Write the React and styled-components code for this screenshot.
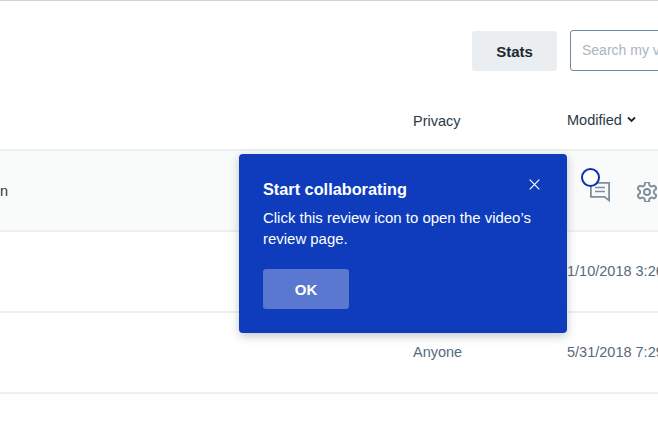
import React from 'react';
import styled, { createGlobalStyle } from 'styled-components';

const Global = createGlobalStyle`
  html, body { margin: 0; padding: 0; background: #fff; overflow: hidden; }
  body { font-family: "Liberation Sans", Arial, sans-serif; -webkit-font-smoothing: antialiased; }
`;

const Page = styled.div`
  position: relative;
  width: 658px;
  height: 426px;
  overflow: hidden;
  border-top: 1px solid #c9d4dc;
  box-sizing: border-box;
`;

const Toolbar = styled.div`
  display: flex;
  align-items: flex-start;
  gap: 13px;
  height: 41px;
  padding: 29px 0 0 472px;
`;

const StatsButton = styled.button`
  flex: none;
  width: 85px;
  height: 40px;
  margin-top: 1px;
  border: 0;
  border-radius: 3px;
  background: #ebeef0;
  color: #1c2833;
  font: bold 15px "Liberation Sans", Arial, sans-serif;
  padding: 0;
`;

const Search = styled.div`
  flex: none;
  box-sizing: border-box;
  width: 240px;
  height: 41px;
  border: 1px solid #71899b;
  border-radius: 3px;
  padding: 0 11px 1px;
  display: flex;
  align-items: center;
  color: #a9b6c1;
  font-size: 14px;
  white-space: nowrap;
`;

const columns = `
  display: grid;
  grid-template-columns: 413px 154px 1fr;
  align-items: center;
`;

const Header = styled.div`
  ${columns}
  box-sizing: border-box;
  height: 78px;
  padding-top: 20px;
  color: #2b3a47;
  font-size: 14.5px;
`;

const HeadCell = styled.div`
  grid-column: ${p => p.$col};
  display: flex;
  align-items: center;
  gap: 5px;
  margin-top: ${p => (p.$up ? -1 : 1)}px;
`;

const Row = styled.div`
  ${columns}
  box-sizing: border-box;
  height: 81px;
  border-top: 2px solid #edf0f1;
  background: ${p => (p.$active ? '#f9fafa' : '#fff')};
  font-size: 14.5px;
  color: #566a7b;
  white-space: nowrap;
`;

const LastRule = styled.div`
  height: 2px;
  background: #edf0f1;
`;

const NameCell = styled.div`
  grid-column: 1;
  color: #2b3a47;
`;

const PrivacyCell = styled.div`
  grid-column: 2;
  margin-top: -1px;
`;

const DateCell = styled.div`
  grid-column: 3;
  margin-top: -2px;
`;

const ActionCell = styled.div`
  grid-column: 3;
  display: flex;
  align-items: center;
  gap: 27px;
  padding: 2px 0 0 23px;
  color: #7b8f9f;
`;

const Popover = styled.div`
  position: absolute;
  left: 239px;
  top: 153px;
  box-sizing: border-box;
  width: 328px;
  height: 179px;
  padding: 24px 24px 0;
  border-radius: 4px;
  background: #0e3cbc;
  box-shadow: 0 3px 10px rgba(40, 55, 70, 0.28);
  color: #fff;
`;

const Title = styled.div`
  font-size: 16.3px;
  font-weight: bold;
  line-height: 22px;
`;

const Body = styled.p`
  margin: 7px 0 0;
  font-size: 14.95px;
  line-height: 21px;
`;

const OkButton = styled.button`
  display: block;
  width: 86px;
  height: 40px;
  margin-top: 20px;
  padding: 0;
  border: 0;
  border-radius: 3px;
  background: #5b78d0;
  color: #fff;
  font: bold 15px "Liberation Sans", Arial, sans-serif;
`;

const Close = styled.svg`
  position: absolute;
  right: 27px;
  top: 25px;
`;

const Ring = styled.div`
  position: absolute;
  left: 581px;
  top: 167px;
  box-sizing: border-box;
  width: 19px;
  height: 19px;
  border: 2.5px solid #0e2fae;
  border-radius: 50%;
  background: #fff;
`;

const Chevron = () => (
  <svg width="9" height="7" viewBox="0 0 9 7" fill="none">
    <path d="M1 1.500 4.500 5 8 1.500" stroke="#1c2833" strokeWidth="1.8" />
  </svg>
);

const ReviewIcon = () => (
  <svg width="20" height="20" viewBox="0 0 20 20" fill="none" stroke="currentColor" strokeWidth="1.8">
    <path d="M.9.900h18.200v17.500L14.500 14.800H.9z" />
    <path d="M5 5.500h10M5 9.500h10" strokeWidth="1.400" />
  </svg>
);

const GearIcon = () => (
  <svg width="20" height="20" viewBox="2 2 20 20" fill="none" stroke="currentColor" strokeWidth="1.900" strokeLinecap="round" strokeLinejoin="round">
    <path d="M12.220 2h-.440a2 2 0 0 0-2 2v.180a2 2 0 0 1-1 1.730l-.430.250a2 2 0 0 1-2 0l-.150-.080a2 2 0 0 0-2.730.730l-.220.380a2 2 0 0 0 .730 2.730l.150.100a2 2 0 0 1 1 1.720v.510a2 2 0 0 1-1 1.740l-.150.090a2 2 0 0 0-.730 2.730l.220.380a2 2 0 0 0 2.730.730l.150-.080a2 2 0 0 1 2 0l.430.250a2 2 0 0 1 1 1.730V20a2 2 0 0 0 2 2h.440a2 2 0 0 0 2-2v-.180a2 2 0 0 1 1-1.730l.430-.250a2 2 0 0 1 2 0l.150.080a2 2 0 0 0 2.730-.730l.220-.390a2 2 0 0 0-.730-2.730l-.150-.080a2 2 0 0 1-1-1.740v-.500a2 2 0 0 1 1-1.740l.150-.090a2 2 0 0 0 .730-2.730l-.220-.380a2 2 0 0 0-2.730-.730l-.150.080a2 2 0 0 1-2 0l-.430-.250a2 2 0 0 1-1-1.730V4a2 2 0 0 0-2-2z" />
    <circle cx="12" cy="12" r="3" />
  </svg>
);

export default function App() {
  return (
    <Page>
      <Global />
      <Toolbar>
        <StatsButton>Stats</StatsButton>
        <Search>Search my videos</Search>
      </Toolbar>
      <Header>
        <HeadCell $col={2}>Privacy</HeadCell>
        <HeadCell $col={3} $up>Modified <Chevron /></HeadCell>
      </Header>
      <Row $active>
        <NameCell>n</NameCell>
        <ActionCell><ReviewIcon /><GearIcon /></ActionCell>
      </Row>
      <Row>
        <DateCell>1/10/2018 3:26 PM</DateCell>
      </Row>
      <Row>
        <PrivacyCell>Anyone</PrivacyCell>
        <DateCell>5/31/2018 7:29 PM</DateCell>
      </Row>
      <LastRule />
      <Popover>
        <Title>Start collaborating</Title>
        <Body>Click this review icon to open the video’s<br />review page.</Body>
        <OkButton>OK</OkButton>
        <Close width="11" height="11" viewBox="0 0 11 11" fill="none" stroke="#fff" strokeWidth="1.2">
          <path d="M.7.7l9.600 9.600M10.300.7.7 10.300" />
        </Close>
      </Popover>
      <Ring />
    </Page>
  );
}
